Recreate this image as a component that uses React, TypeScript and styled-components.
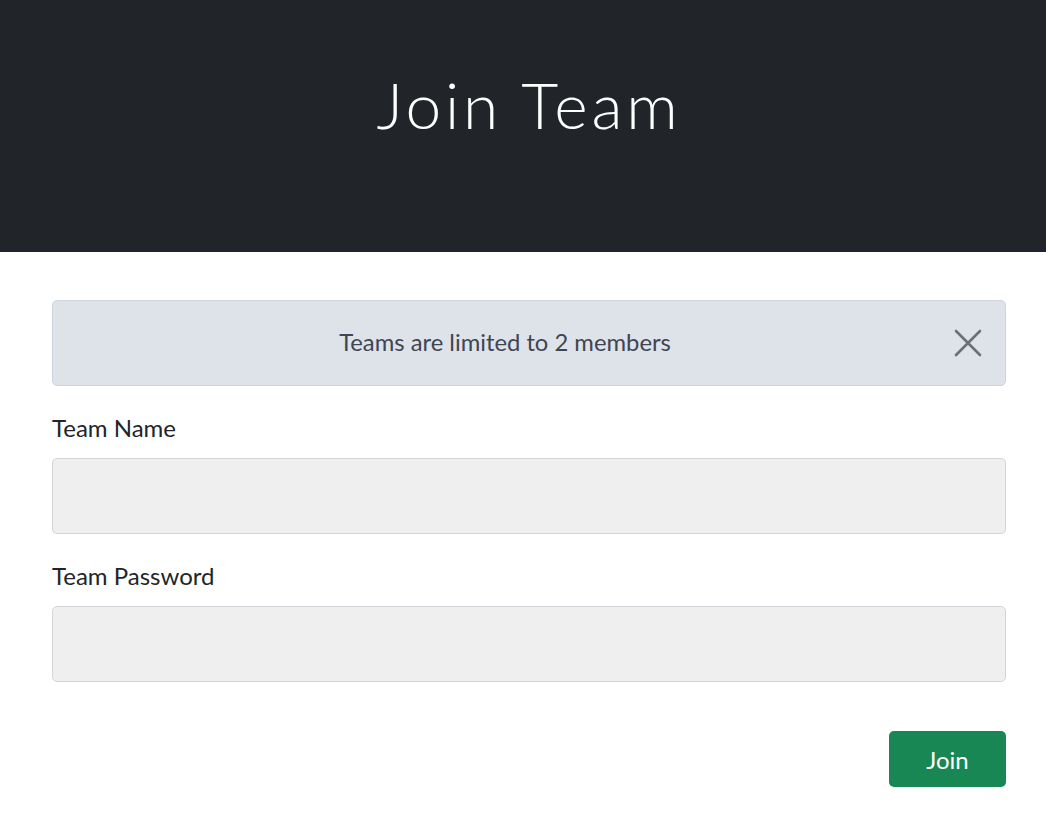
import styled, {createGlobalStyle} from "styled-components";
import React, {useState} from "react";

const GlobalStyle = createGlobalStyle`
  body {
    margin: 0;
    background: #ffffff;
    font-family: "Lato", "Noto Sans", sans-serif;
    color: #212529;
  }
  * {
    box-sizing: border-box;
  }
`

const CloseIcon = () => (
    <svg width="28" height="28" viewBox="0 0 28 28" fill="none">
        <path d="M2 2L26 26M26 2L2 26" stroke="currentColor" strokeWidth="2.6" strokeLinecap="round"/>
    </svg>
)

export default function App() {
    const [showAlert, setShowAlert] = useState(true)
    const [name, setName] = useState("")
    const [password, setPassword] = useState("")

    const onSubmit = (e: React.FormEvent) => {
        e.preventDefault()
    }

    return (
        <>
            <GlobalStyle/>
            <StyledJumbotron>
                <StyledTitle>Join Team</StyledTitle>
            </StyledJumbotron>
            <StyledContainer>
                {showAlert && <StyledAlert>
                    Teams are limited to 2 members
                    <StyledClose onClick={() => setShowAlert(false)} aria-label="Close">
                        <CloseIcon/>
                    </StyledClose>
                </StyledAlert>}
                <form onSubmit={onSubmit}>
                    <StyledGroup>
                        <StyledLabel htmlFor="name">Team Name</StyledLabel>
                        <StyledInput id="name" value={name} onChange={e => setName(e.target.value)}/>
                    </StyledGroup>
                    <StyledGroup>
                        <StyledLabel htmlFor="password">Team Password</StyledLabel>
                        <StyledInput id="password" type="password" value={password}
                                     onChange={e => setPassword(e.target.value)}/>
                    </StyledGroup>
                    <StyledActions>
                        <StyledButton type="submit">Join</StyledButton>
                    </StyledActions>
                </form>
            </StyledContainer>
        </>
    )
}

const StyledJumbotron = styled.div`
  height: 252px;
  background: #212529;
  display: flex;
  justify-content: center;
  padding: 66px 0 0 12px;
`

const StyledTitle = styled.h1`
  margin: 0;
  color: #ffffff;
  font-family: "Lato", sans-serif;
  font-weight: 300;
  font-size: 64px;
  line-height: 77px;
  letter-spacing: 3.8px;
`

const StyledContainer = styled.div`
  width: 954px;
  margin: 48px 0 0 52px;
`

const StyledAlert = styled.div`
  position: relative;
  height: 86px;
  display: flex;
  align-items: center;
  justify-content: center;
  padding: 0 48px 3px 0;
  background: #dee2e9;
  border: 1px solid #cfd4db;
  border-radius: 5px;
  color: #3f4553;
  font-size: 23.8px;
  margin-bottom: 27px;
`

const StyledClose = styled.button`
  position: absolute;
  right: 23px;
  top: 28px;
  border: none;
  background: transparent;
  padding: 0;
  color: #6d7073;
  cursor: pointer;
  display: flex;
`

const StyledGroup = styled.div`
  display: flex;
  flex-direction: column;
  margin-bottom: 27px;
`

const StyledLabel = styled.label`
  font-size: 24px;
  line-height: 30px;
  margin-bottom: 15px;
  color: #212529;
`

const StyledInput = styled.input`
  height: 76px;
  width: 100%;
  background: #efefef;
  border: 1px solid #d1d5da;
  border-radius: 5px;
  padding: 0 18px;
  font-size: 20px;
  font-family: "Lato", sans-serif;
  outline: none;
`

const StyledActions = styled.div`
  display: flex;
  justify-content: flex-end;
  padding-top: 22px;
`

const StyledButton = styled.button`
  width: 117px;
  height: 56px;
  background: #198754;
  border: none;
  border-radius: 5px;
  color: #ffffff;
  font-family: "Lato", sans-serif;
  font-size: 24px;
  cursor: pointer;
`
